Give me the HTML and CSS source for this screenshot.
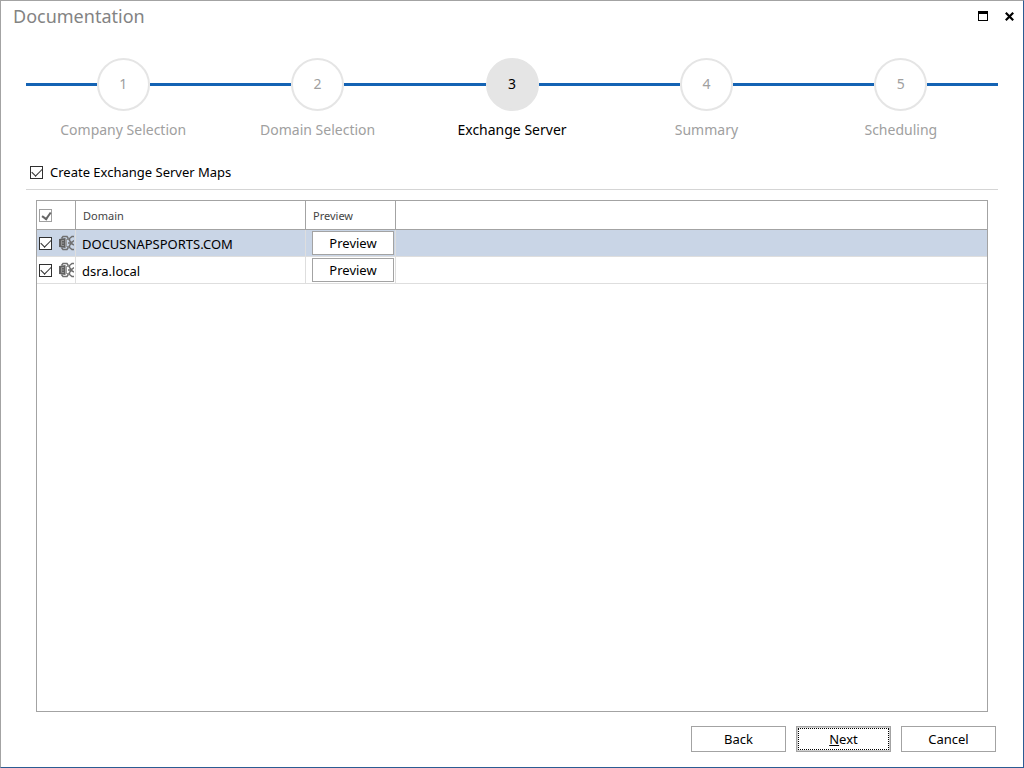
FILE: index.html
```html
<!DOCTYPE html>
<html lang="en">
<head>
<meta charset="utf-8">
<meta name="viewport" content="width=device-width, initial-scale=1">
<title>Documentation</title>
<link rel="stylesheet" href="styles.css">
</head>
<body>
<svg class="defs" aria-hidden="true">
  <symbol id="exchange" viewBox="0 0 15 16">
    <g fill="none" stroke="#707070" stroke-width="1.500">
      <path d="M2.500 3.500L4 1.500H8L9 3V5M2.500 12.500L4 14.500H8L9 13V11"/>
      <path d="M15 1.500H13L10.500 3.500V5.500L12.500 8M15 14.500H13L10.500 12.500V10.500L12.500 8M9 8H12L15 5.500M12.500 8.500L15 10"/>
    </g>
    <path fill="#606060" d="M0 4L6.500 3V13L0 12Z"/>
    <path fill="#9a9a9a" d="M6.500 4H8V12H6.500Z"/>
    <path fill="none" stroke="#959595" d="M5 5.500H2.500V10.500H5M2.500 8H5"/>
  </symbol>
</svg>
<main class="window">
  <header class="titlebar">
    <h1 class="title">Documentation</h1>
    <div class="window-buttons">
      <button class="window-button" type="button" aria-label="Maximize"><svg width="10" height="10" viewBox="0 0 10 10" shape-rendering="crispEdges"><path fill="#000" fill-rule="evenodd" d="M0 0H10V10H0ZM1 3V9H9V3Z"/></svg></button>
      <button class="window-button" type="button" aria-label="Close"><svg width="9" height="9" viewBox="0 0 9 9"><path stroke="#000" stroke-width="2.200" d="M.8.8L8.200 8.200M8.200.8L.8 8.200"/></svg></button>
    </div>
  </header>
  <ol class="steps">
    <li class="step"><span class="step-track"><span class="step-number">1</span></span><span class="step-label">Company Selection</span></li>
    <li class="step"><span class="step-track"><span class="step-number">2</span></span><span class="step-label">Domain Selection</span></li>
    <li class="step step-current" aria-current="step"><span class="step-track"><span class="step-number">3</span></span><span class="step-label">Exchange Server</span></li>
    <li class="step"><span class="step-track"><span class="step-number">4</span></span><span class="step-label">Summary</span></li>
    <li class="step"><span class="step-track"><span class="step-number">5</span></span><span class="step-label">Scheduling</span></li>
  </ol>
  <div class="option">
    <label class="option-label"><input class="check" type="checkbox" checked>Create Exchange Server Maps</label>
  </div>
  <section class="grid">
    <table class="table">
      <colgroup><col class="col-select"><col class="col-domain"><col class="col-preview"><col></colgroup>
      <thead>
        <tr><th><input class="check check-all" type="checkbox" aria-label="Select all domains" checked></th><th class="heading">Domain</th><th class="heading">Preview</th><th></th></tr>
      </thead>
      <tbody>
        <tr class="selected">
          <td><div class="select-cell"><input class="check" type="checkbox" aria-label="Select DOCUSNAPSPORTS.COM" checked><svg class="server-icon" aria-hidden="true"><use href="#exchange"/></svg></div></td>
          <td class="domain">DOCUSNAPSPORTS.COM</td>
          <td class="action"><button class="preview-button" type="button">Preview</button></td>
          <td></td>
        </tr>
        <tr>
          <td><div class="select-cell"><input class="check" type="checkbox" aria-label="Select dsra.local" checked><svg class="server-icon" aria-hidden="true"><use href="#exchange"/></svg></div></td>
          <td class="domain">dsra.local</td>
          <td class="action"><button class="preview-button" type="button">Preview</button></td>
          <td></td>
        </tr>
      </tbody>
    </table>
  </section>
  <footer class="footer">
    <button class="button" type="button">Back</button>
    <button class="button button-default" type="button"><span class="button-focus"><span class="access-key">N</span>ext</span></button>
    <button class="button" type="button">Cancel</button>
  </footer>
</main>
</body>
</html>
```
FILE: styles.css
```css
* {
  box-sizing: border-box;
}

body {
  margin: 0;
  background: #fff;
  color: #000;
  font-family: "Noto Sans", "Open Sans", sans-serif;
  font-size: 13px;
  line-height: 18px;
}

button {
  font: inherit;
  color: inherit;
}

.defs {
  position: absolute;
  width: 0;
  height: 0;
}

.window {
  display: flex;
  flex-direction: column;
  min-height: 100vh;
  border: 1px solid #a3a3a3;
  border-right-color: #2c5c93;
  border-bottom-color: #2c5c93;
}

.titlebar {
  display: flex;
  justify-content: space-between;
  height: 57px;
  padding: 3px 9px 0 12px;
}

.title {
  margin: 0;
  color: #838383;
  font-size: 18px;
  font-weight: 400;
  line-height: 24px;
}

.window-buttons {
  display: flex;
  gap: 17px;
  height: 24px;
  align-items: center;
}

.window-button {
  display: flex;
  padding: 0;
  border: 0;
  background: none;
}

.steps {
  display: flex;
  margin: 0;
  padding: 0 25px;
  list-style: none;
}

.step {
  flex: 1;
  color: #a0a0a0;
  font-size: 14px;
  line-height: 20px;
  text-align: center;
}

.step-track {
  display: flex;
  align-items: center;
}

.step-track::before,
.step-track::after {
  content: "";
  flex: 1;
  height: 3px;
  background: #1463b4;
}

.step-number {
  width: 53px;
  height: 53px;
  border: 2px solid #e5e5e5;
  border-radius: 50%;
  line-height: 48px;
}

.step-label {
  display: block;
  margin-top: 9px;
}

.step-current {
  color: #000;
}

.step-current .step-number {
  background: #e5e5e5;
}

.option {
  margin: 23px 25px 0;
  padding: 0 4px 8px;
  border-bottom: 1px solid #d5d5d5;
}

.option-label {
  display: flex;
  align-items: center;
  gap: 7px;
  width: fit-content;
}

.check {
  appearance: none;
  flex: none;
  display: block;
  width: 13px;
  height: 13px;
  margin: 0;
  border: 1px solid #303030;
  background: #fff;
}

.check:checked::before {
  content: "";
  display: block;
  width: 9px;
  height: 5px;
  margin: 1px;
  border-left: 1px solid #303030;
  border-bottom: 1px solid #303030;
  transform: rotate(-45deg);
}

.check-all {
  border-color: #a0a0a0;
}

.check-all:checked::before {
  width: 7px;
  height: 4px;
  margin: 2px;
  border-width: 0 0 2px 2px;
  border-color: #666;
  transform: rotate(-55deg);
}

.grid {
  flex: 1;
  margin: 10px 35px 0;
  border: 1px solid #a3a3a3;
}

.table {
  width: 100%;
  table-layout: fixed;
  border-collapse: separate;
  border-spacing: 0;
}

.col-select {
  width: 39px;
}

.col-domain {
  width: 230px;
}

.col-preview {
  width: 90px;
}

.table th {
  height: 29px;
  padding: 0 2px;
  border-right: 1px solid #a3a3a3;
  border-bottom: 1px solid #a3a3a3;
}

.table .heading {
  padding: 1px 7px 0;
  color: #444;
  font-size: 11px;
  font-weight: 400;
  text-align: left;
}

.table td {
  height: 27px;
  padding: 0;
  border-right: 1px solid #dedede;
  border-bottom: 1px solid #dedede;
}

.table th:last-child,
.table td:last-child {
  border-right: 0;
}

.selected {
  background: #c9d5e6;
}

.select-cell {
  display: flex;
  align-items: center;
  gap: 7px;
  padding-left: 2px;
}

.server-icon {
  width: 15px;
  height: 16px;
}

.table .domain {
  padding: 1px 0 0 6px;
}

.table .action {
  padding: 0 1px 0 6px;
}

.preview-button {
  display: block;
  width: 100%;
  height: 24px;
  padding: 0;
  border: 1px solid #a3a3a3;
  background: #fff;
}

.footer {
  display: flex;
  justify-content: flex-end;
  gap: 10px;
  padding: 14px 27px 15px;
}

.button {
  width: 95px;
  height: 26px;
  padding: 0;
  border: 1px solid #a3a3a3;
  background: #fff;
}

.button-default {
  padding: 1px;
  background: #d0d0d0;
}

.button-focus {
  display: block;
  height: 22px;
  border: 1px dotted #000;
  background: #fff;
  line-height: 20px;
}

.access-key {
  text-decoration: underline;
}
```
